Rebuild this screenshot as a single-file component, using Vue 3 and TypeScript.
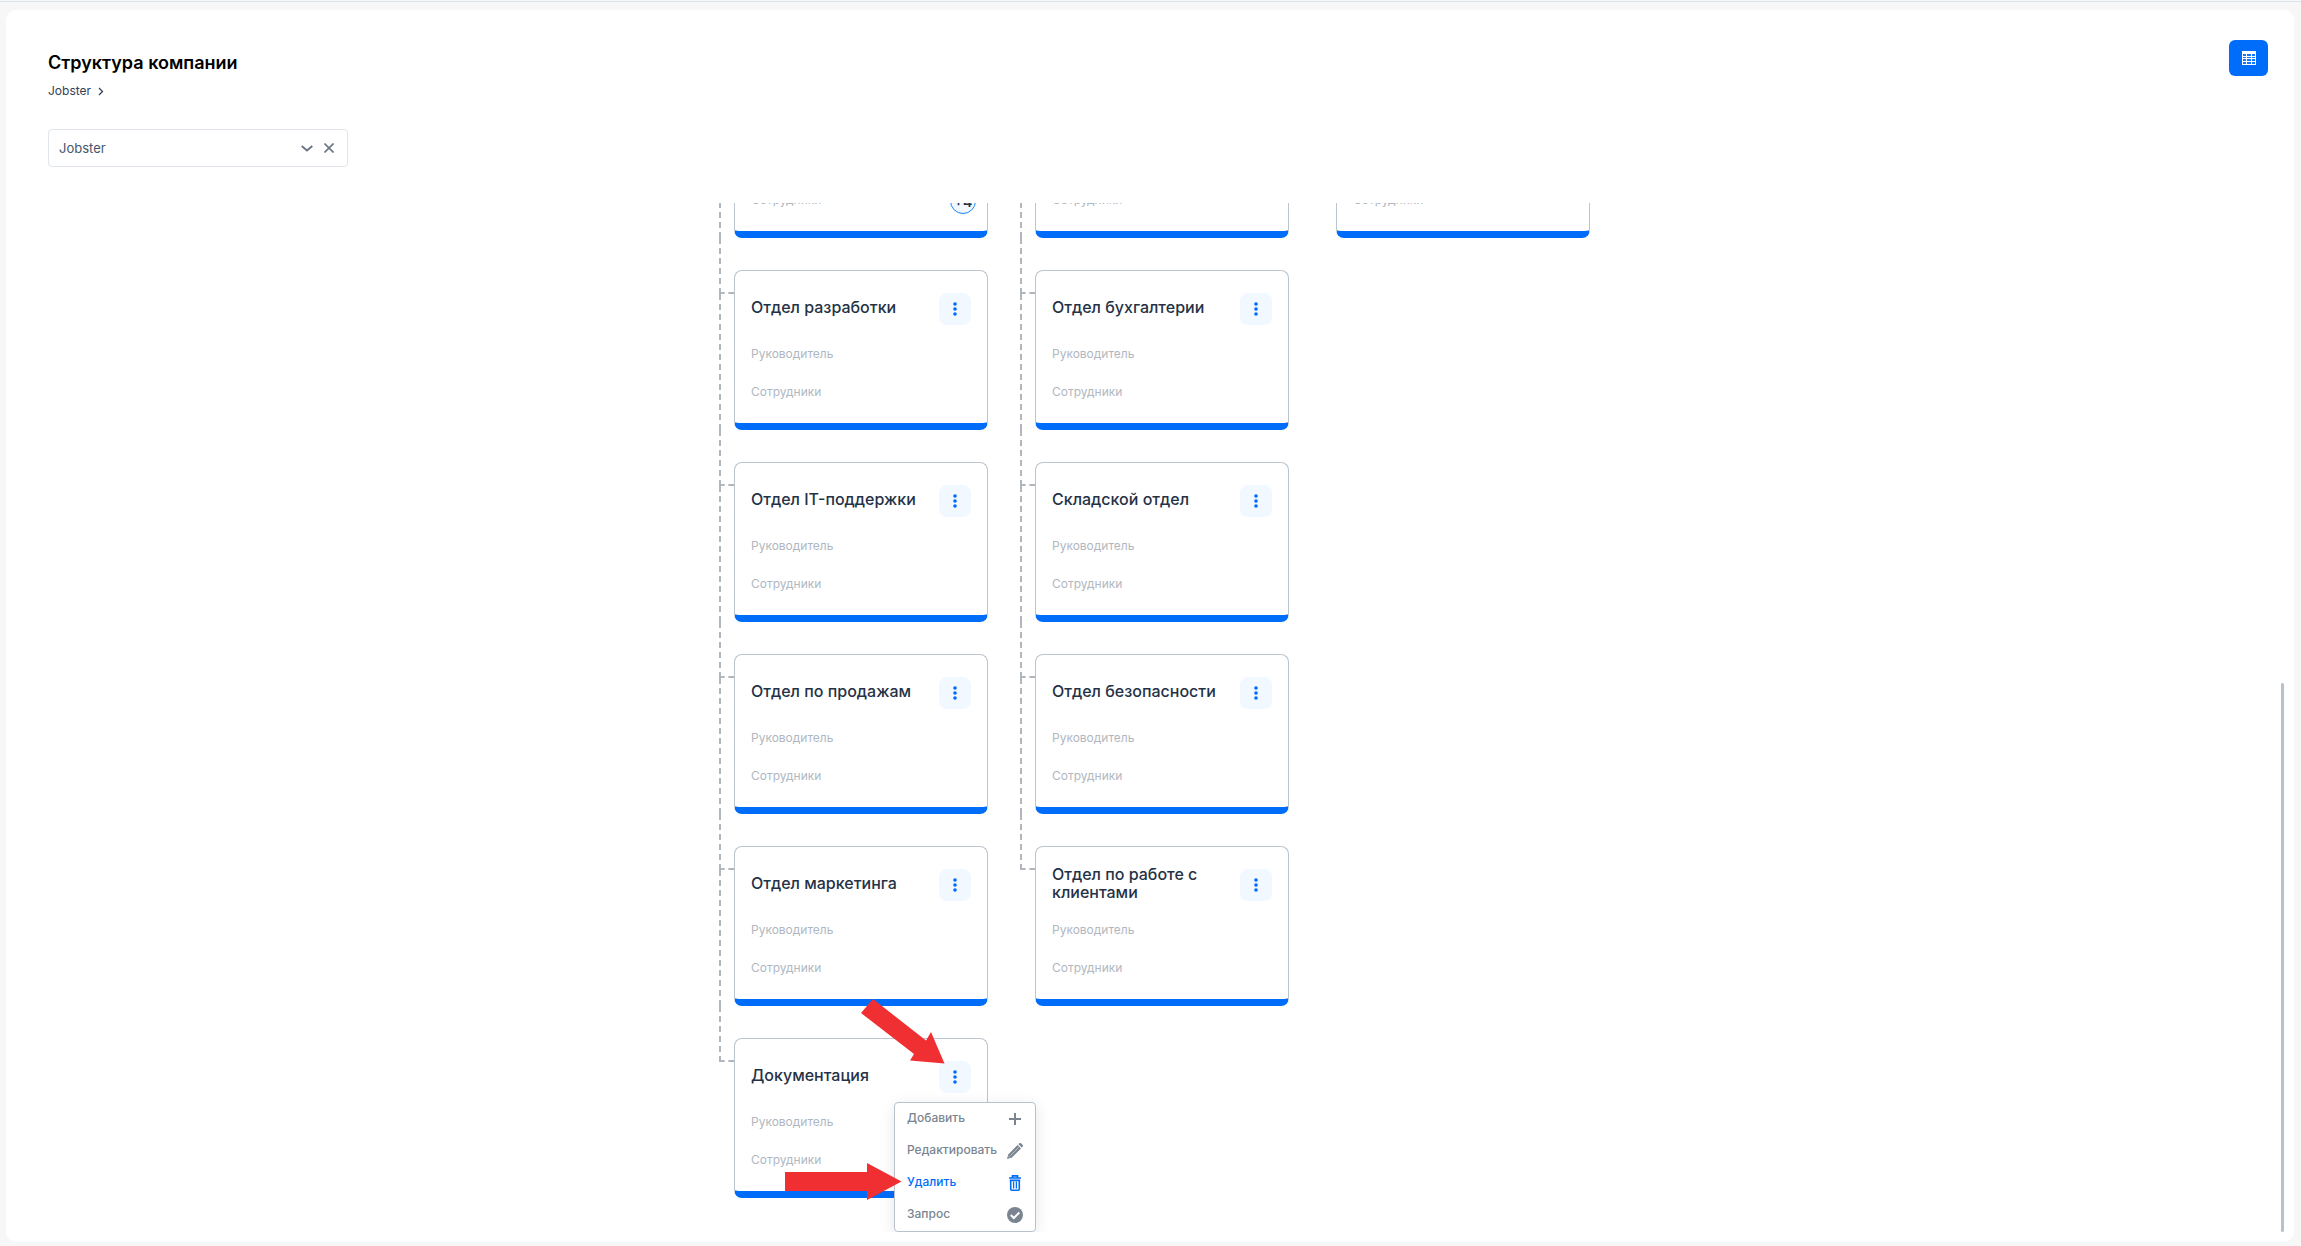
<script setup lang="ts">
import { ref } from 'vue'

interface Department {
  title: string
  extra?: number
  menuOpen?: boolean
}

interface Branch {
  linked: boolean
  departments: Department[]
}

interface MenuAction {
  id: 'add' | 'edit' | 'remove' | 'request'
  label: string
}

const branches: Branch[] = [
  {
    linked: true,
    departments: [
      { title: '', extra: 4 },
      { title: 'Отдел разработки' },
      { title: 'Отдел IT-поддержки' },
      { title: 'Отдел по продажам' },
      { title: 'Отдел маркетинга' },
      { title: 'Документация', menuOpen: true },
    ],
  },
  {
    linked: true,
    departments: [
      { title: '' },
      { title: 'Отдел бухгалтерии' },
      { title: 'Складской отдел' },
      { title: 'Отдел безопасности' },
      { title: 'Отдел по работе с клиентами' },
    ],
  },
  { linked: false, departments: [{ title: '' }] },
]

const actions: MenuAction[] = [
  { id: 'add', label: 'Добавить' },
  { id: 'edit', label: 'Редактировать' },
  { id: 'remove', label: 'Удалить' },
  { id: 'request', label: 'Запрос' },
]

const company = ref('Jobster')
const activeAction = ref<MenuAction['id']>('remove')
const visibleShare = 8 / 15
</script>

<template>
  <div class="page">
    <main class="panel">
      <header class="header">
        <div>
          <h1>Структура компании</h1>
          <nav class="crumbs">
            <a href="#">Jobster</a>
            <svg width="6" height="9" viewBox="0 0 6 9"><path d="M1 1l3.500 3.500L1 8" fill="none" stroke="currentColor" stroke-width="1.300" /></svg>
          </nav>
        </div>
        <button class="table-btn" type="button" aria-label="Таблица">
          <svg width="14" height="14" viewBox="0 0 14 14">
            <path fill="#fff" d="M0 0h14v14H0z" />
            <path fill="#1476fb" d="M1 3h3v2H1zM5 3h4v2H5zM10 3h3v2h-3zM1 6h3v1H1zM5 6h4v1H5zM10 6h3v1h-3zM1 8h3v2H1zM5 8h4v2H5zM10 8h3v2h-3zM1 11h3v2H1zM5 11h4v2H5zM10 11h3v2h-3z" />
          </svg>
        </button>
      </header>

      <div class="picker">
        <select v-model="company" aria-label="Компания">
          <option>Jobster</option>
        </select>
        <svg width="12" height="8" viewBox="0 0 12 8"><path d="M.7 2l5.300 4.500L11.300 2" fill="none" stroke="currentColor" stroke-width="2" /></svg>
        <button class="clear" type="button" aria-label="Очистить">
          <svg width="10" height="10" viewBox="0 0 10 10"><path d="M.5.5l9 9M9.500.5l-9 9" fill="none" stroke="currentColor" stroke-width="1.600" /></svg>
        </button>
      </div>

      <div class="viewport">
        <div class="tree">
          <ul v-for="(branch, b) in branches" :key="b" class="branch" :class="{ linked: branch.linked }">
            <li v-for="(dep, d) in branch.departments" :key="d" class="node">
              <article class="dep">
                <div class="dep-head">
                  <h2>{{ dep.title }}</h2>
                  <div class="more-wrap">
                    <button class="more" type="button" aria-label="Действия">
                      <svg width="4" height="14" viewBox="0 0 4 14" fill="currentColor">
                        <circle cx="2" cy="2" r="1.800" /><circle cx="2" cy="7" r="1.800" /><circle cx="2" cy="12" r="1.800" />
                      </svg>
                    </button>
                    <div v-if="dep.menuOpen" class="menu" role="menu">
                      <button
                        v-for="action in actions"
                        :key="action.id"
                        type="button"
                        role="menuitem"
                        :class="{ active: action.id === activeAction }"
                      >
                        <span>{{ action.label }}</span>
                        <svg v-if="action.id === 'add'" width="16" height="16" viewBox="0 0 16 16"><path d="M8 2v12M2 8h12" stroke="currentColor" stroke-width="2" /></svg>
                        <svg v-else-if="action.id === 'edit'" width="16" height="16" viewBox="0 0 16 16">
                          <path fill="currentColor" d="M0 16l1.200-4.600L10.600 2l3.400 3.400-9.400 9.400zM11.400 1.200l.7-.7c.6-.6 1.500-.6 2.100 0l1.300 1.300c.6.6.6 1.500 0 2.100l-.7.7z" />
                          <path d="M3.200 12.800l8.400-8.400M1.300 12.800l1.900 1.900" fill="none" stroke="#fff" stroke-width=".5" />
                        </svg>
                        <svg v-else-if="action.id === 'remove'" width="16" height="16" viewBox="0 0 16 16" fill="none" stroke="currentColor">
                          <path d="M2 3h12M5.500 2.500V.8h5v1.700" stroke-width="1.700" />
                          <path d="M3.700 5v9.200q0 1 1 1h6.600q1 0 1-1V5M2.800 5.400h10.400" stroke-width="1.600" />
                          <path d="M6.600 6.500V13.500M9.400 6.500V13.500" stroke-width="1.300" />
                        </svg>
                        <svg v-else width="16" height="16" viewBox="0 0 16 16">
                          <circle cx="8" cy="8" r="8" fill="currentColor" />
                          <path d="M3.800 8l3 3 5.500-5.500" fill="none" stroke="#fff" stroke-width="2" />
                        </svg>
                      </button>
                    </div>
                  </div>
                </div>
                <p class="row">Руководитель</p>
                <p class="row">
                  Сотрудники
                  <span v-if="dep.extra" class="count">+{{ dep.extra }}</span>
                </p>
                <svg v-if="dep.menuOpen" class="pointers" width="160" height="202" viewBox="0 0 160 202" fill="#ef2f32">
                  <path d="M88 0L76 14l53 41-4 6.500 34.500 3L146 33l-5 8.500z" />
                  <path d="M0 173h82v-9l34.500 18.500L82 201v-9H0z" />
                </svg>
              </article>
            </li>
          </ul>
        </div>
        <div class="track"><div class="thumb" :style="{ height: `${visibleShare * 100}%` }"></div></div>
      </div>
    </main>
  </div>
</template>

<style>
body {
  margin: 0;
  background: #f7f7f7;
}
</style>

<style scoped>
*,
*::before,
*::after {
  box-sizing: border-box;
}
.page {
  height: 100vh;
  padding: 8px 7px 4px 6px;
  display: flex;
  flex-direction: column;
  font-family: Inter, "Liberation Sans", sans-serif;
  background: #f7f7f7;
}
.page::before {
  content: "";
  height: 1px;
  margin: -7px -7px 8px -6px;
  background: #dbe4f2;
  flex: none;
}
.panel {
  flex: 1;
  min-height: 0;
  display: flex;
  flex-direction: column;
  padding: 30px 10px 10px 42px;
  border-radius: 10px;
  background: #fff;
}
.header {
  display: flex;
  justify-content: space-between;
  align-items: flex-start;
  padding-right: 16px;
}
h1 {
  margin: 10px 0 6px;
  font-size: 18px;
  line-height: 26px;
  font-weight: 600;
  color: #000;
}
.crumbs {
  display: flex;
  align-items: center;
  gap: 7px;
  font-size: 12px;
  line-height: 18px;
  color: #334155;
}
.crumbs a {
  color: inherit;
  text-decoration: none;
}
button {
  border: 0;
  padding: 0;
  font-family: inherit;
  cursor: pointer;
}
.table-btn {
  width: 39px;
  height: 36px;
  display: flex;
  align-items: center;
  justify-content: center;
  border-radius: 6px;
  background: #006cfa;
}
.picker {
  flex: none;
  display: flex;
  align-items: center;
  width: 300px;
  height: 38px;
  margin: 29px 0 36px;
  padding-right: 13px;
  gap: 11px;
  border: 1px solid #e1e5ec;
  border-radius: 4px;
  color: #6b7785;
}
.picker select {
  flex: 1;
  height: 100%;
  padding: 0 10px;
  border: 0;
  appearance: none;
  background: transparent;
  font-family: inherit;
  font-size: 13px;
  color: #475569;
}
.clear {
  display: flex;
  background: none;
  color: #6b7785;
}
.viewport {
  flex: 1;
  min-height: 0;
  display: flex;
  overflow: hidden;
}
.tree {
  flex: 1;
  display: flex;
  justify-content: center;
  align-items: flex-start;
  align-self: flex-end;
  gap: 32px;
  padding: 0 20px 34px 0;
}
.track {
  width: 3px;
  display: flex;
  flex-direction: column;
  justify-content: flex-end;
}
.thumb {
  border-radius: 2px;
  background: #b7c1cc;
}
.branch {
  margin: 0;
  padding: 0;
  list-style: none;
}
.node {
  position: relative;
  padding: 32px 0 0 15px;
}
.linked .node::before {
  content: "";
  position: absolute;
  left: 0;
  top: 0;
  width: 15px;
  height: 56px;
  border: dashed #b1b6bc;
  border-width: 0 0 2px 2px;
}
.linked .node:not(:last-child)::after {
  content: "";
  position: absolute;
  left: 0;
  top: 56px;
  bottom: 0;
  border-left: 2px dashed #b1b6bc;
}
.dep {
  position: relative;
  width: 254px;
  height: 160px;
  padding: 20px 16px 0;
  border: 1px solid #bcc4cd;
  border-bottom: 7px solid #006cfa;
  border-radius: 8px;
  background: #fff;
}
.dep-head {
  display: flex;
  align-items: center;
  justify-content: space-between;
  height: 36px;
  margin-bottom: 14px;
}
h2 {
  margin: 0;
  padding-bottom: 4px;
  font-size: 16px;
  line-height: 18px;
  font-weight: 500;
  color: #253246;
}
.more-wrap {
  position: relative;
  flex: none;
}
.more {
  width: 32px;
  height: 32px;
  display: flex;
  align-items: center;
  justify-content: center;
  border-radius: 8px;
  background: #f1f8ff;
  color: #006cfa;
}
.row {
  display: flex;
  align-items: center;
  justify-content: space-between;
  height: 26px;
  margin: 0 0 12px;
  font-size: 12px;
  line-height: 18px;
  color: #afb7c0;
}
.count {
  width: 26px;
  height: 26px;
  margin: 2px -5px 0 0;
  padding-top: 2px;
  display: flex;
  align-items: center;
  justify-content: center;
  border: 1px solid #1a86ff;
  border-radius: 50%;
  background: #f1f8ff;
  font-size: 14px;
  font-weight: 600;
  color: #253246;
}
.menu {
  position: absolute;
  z-index: 1;
  left: -45px;
  top: 41px;
  width: 142px;
  border: 1px solid #b9c1cc;
  border-radius: 4px;
  background: #fff;
  box-shadow: 0 4px 16px rgba(0, 0, 0, 0.1);
}
.menu button {
  display: flex;
  align-items: center;
  justify-content: space-between;
  width: 100%;
  height: 32px;
  padding: 0 12px;
  background: none;
  font-size: 12px;
  font-weight: 500;
  color: #7a8591;
}
.menu span {
  padding-bottom: 4px;
}
.menu .active {
  color: #006cfa;
}
.pointers {
  position: absolute;
  z-index: 2;
  left: 50px;
  top: -40px;
  pointer-events: none;
}
</style>
